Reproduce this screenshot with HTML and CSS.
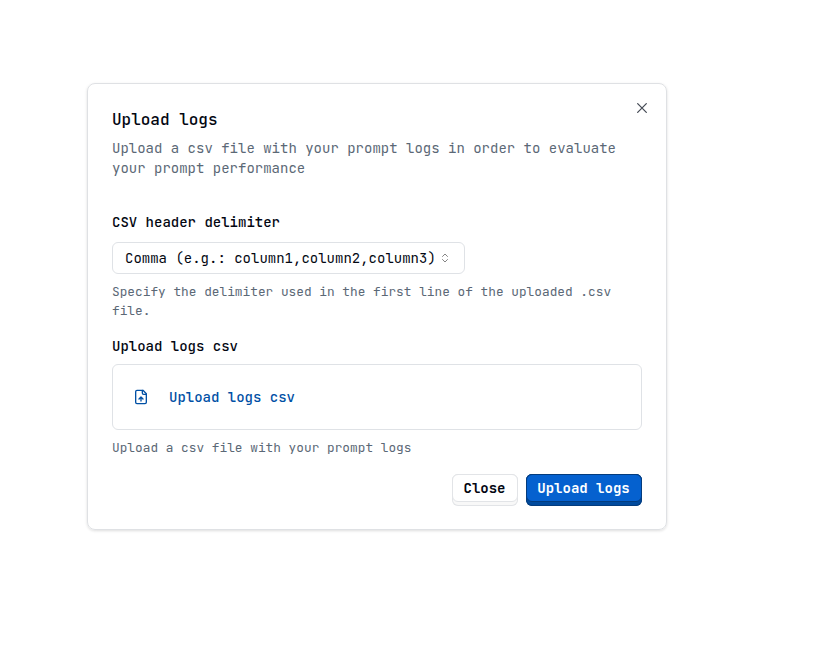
FILE: index.html
```html
<!DOCTYPE html>
<html lang="en">
<head>
<meta charset="utf-8">
<title>Upload logs</title>
<link rel="stylesheet" href="styles.css">
</head>
<body>
<main class="modal">
  <header class="header">
    <div class="heading">
      <h1 class="title">Upload logs</h1>
      <p class="description">Upload a csv file with your prompt logs in order to evaluate<br>your prompt performance</p>
    </div>
    <button class="dismiss" aria-label="Close dialog"><svg width="16" height="16" viewBox="0 0 24 24" fill="none" stroke="currentColor" stroke-width="1.9" stroke-linecap="round"><path d="M18.5 5.5 5.5 18.5M5.5 5.5l13 13"/></svg></button>
  </header>
  <section class="field">
    <h2 class="label">CSV header delimiter</h2>
    <button class="select"><span class="value">Comma (e.g.: column1,column2,column3)</span><svg class="chevrons" width="12" height="12" viewBox="0 0 24 24" fill="none" stroke="currentColor" stroke-width="2" stroke-linecap="round" stroke-linejoin="round"><path d="m7 15 5 5 5-5M7 9l5-5 5 5"/></svg></button>
    <p class="hint">Specify the delimiter used in the first line of the uploaded .csv<br>file.</p>
  </section>
  <section class="field upload">
    <h2 class="label">Upload logs csv</h2>
    <div class="dropzone"><svg width="16" height="16" viewBox="0 0 24 24" fill="none" stroke="currentColor" stroke-width="2" stroke-linecap="round" stroke-linejoin="round"><path d="M15 2H6a2 2 0 0 0-2 2v16a2 2 0 0 0 2 2h12a2 2 0 0 0 2-2V7Z"/><path d="M14 2v4a2 2 0 0 0 2 2h4M12 12v6M15 15l-3-3-3 3"/></svg><span class="action">Upload logs csv</span></div>
    <p class="hint">Upload a csv file with your prompt logs</p>
  </section>
  <footer class="footer">
    <button class="btn"><span class="caption">Close</span></button>
    <button class="btn primary"><span class="caption">Upload logs</span></button>
  </footer>
</main>
</body>
</html>
```
FILE: styles.css
```css
* { box-sizing: border-box; margin: 0; }
body { min-height: 100vh; display: flow-root; background: #fff; color: #030712; font: 14px/20px "JetBrains Mono", "DejaVu Sans Mono", monospace; }
button { font: inherit; color: inherit; background: #fff; padding: 0; }
svg { flex: none; display: block; }
p, h1, h2, span { white-space: nowrap; }
.modal { width: 580px; height: 447px; margin: 83px 0 0 87px; padding: 24px; border: 1px solid #dfe1e4; border-radius: 8px; box-shadow: 0 1px 3px #0002; display: flex; flex-direction: column; }
.header { flex: none; display: flex; justify-content: space-between; height: 103px; }
.title { font-size: 16px; line-height: 24px; font-weight: 550; letter-spacing: -.01px; }
.description { margin-top: 6px; color: #5b6876; }
.dismiss { border: 0; width: 16px; height: 16px; margin: -8px -8px 0 0; color: #454b55; }
.label { font-size: 14px; line-height: 20px; font-weight: 550; }
.field { padding-top: 1px; }
.select { width: 353px; height: 32px; margin-top: 10px; padding: 0 13px 0 12px; border: 1px solid #dfe2e6; border-radius: 6px; display: flex; align-items: center; justify-content: space-between; }
.chevrons { color: #858585; }
.hint { font-size: 12.8px; line-height: 19px; color: #5b6876; margin-top: 8px; }
.upload { padding-top: 16px; }
.dropzone { margin-top: 8px; height: 66px; border: 1px solid #dfe2e6; border-radius: 6px; padding-left: 20px; display: flex; align-items: center; gap: 20px; color: #0050a5; }
.action { font-weight: 550; }
.footer { display: flex; justify-content: flex-end; gap: 8px; margin-top: 17px; }
.btn { width: 66px; height: 32px; padding-bottom: 4px; border: 0; border-radius: 6px; background: #f8f8f8; box-shadow: inset 0 0 0 1px #e2e4e7; font-weight: 600; }
.caption { display: block; height: 28px; padding-right: 1px; line-height: 26px; border: 1px solid #e2e4e7; border-radius: 6px; background: #fff; }
.primary { width: 116px; background: #004a9d; color: #fff; box-shadow: inset 0 0 0 1px #043c7d; }
.primary .caption { background: #0561cf; border-color: #043c7d; }
```
